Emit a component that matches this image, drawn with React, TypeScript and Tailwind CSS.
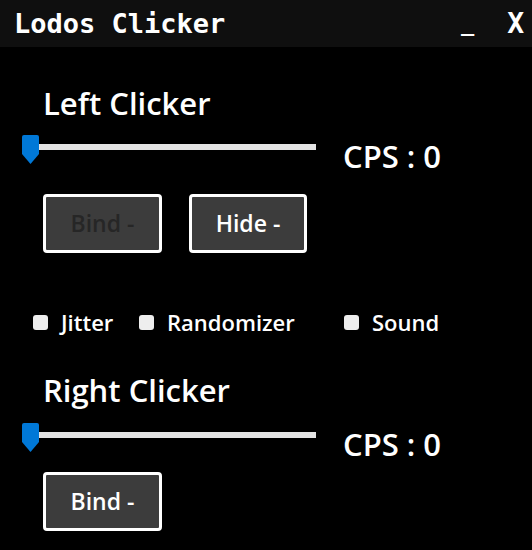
import React from 'react'

function Thumb() {
  return (
    <svg width="17" height="29" viewBox="0 0 17 29" className="absolute left-0 top-0">
      <path d="M2 0 H15 Q17 0 17 2 V19 L8.5 29 L0 19 V2 Q0 0 2 0 Z" fill="#0078d7" />
    </svg>
  )
}

function Slider() {
  return (
    <div className="relative h-[29px] w-[295px]">
      <div className="absolute left-[8px] top-[9px] h-[6px] w-[286px] bg-[#e4e4e4]" />
      <Thumb />
    </div>
  )
}

function Btn({ label, disabled = false, w = 'w-[119px]' }: { label: string; disabled?: boolean; w?: string }) {
  return (
    <button
      className={`${w} flex h-[59px] items-center justify-center rounded-[4px] border-[3px] border-white bg-[#3c3c3c] text-[23px] font-semibold ${disabled ? 'text-[#262626]' : 'text-white'}`}
    >
      {label}
    </button>
  )
}

function Check({ label, w }: { label: string; w: string }) {
  return (
    <div className={`${w} flex items-center`}>
      <span className="h-[15px] w-[15px] rounded-[3px] bg-[#eeeeee]" />
      <span className="ml-[13px] text-[22px] font-semibold leading-[30px] text-white">{label}</span>
    </div>
  )
}

export default function App() {
  return (
    <div className="h-[550px] w-[532px] overflow-hidden bg-black" style={{ fontFamily: '"Open Sans", "Noto Sans", sans-serif' }}>
      <div className="flex h-[47px] items-center bg-[#0f0f0f] pl-[14px] pr-[8px] text-white" style={{ fontFamily: '"DejaVu Sans Mono", monospace' }}>
        <span className="text-[27px] font-bold leading-none">Lodos Clicker</span>
        <span className="ml-auto text-[22px] font-bold leading-none">_</span>
        <span className="ml-[33px] text-[28px] font-bold leading-none">X</span>
      </div>

      <div className="pl-[22px]">
        <div className="ml-[21px] mt-[36px] text-[31px] font-semibold leading-[40px] text-white">Left Clicker</div>
        <div className="mt-[12px] flex items-start">
          <Slider />
          <span className="ml-[26px] mt-[1px] text-[31px] font-semibold leading-[40px] text-white">CPS : 0</span>
        </div>
        <div className="ml-[21px] mt-[18px] flex gap-[27px]">
          <Btn label="Bind -" disabled />
          <Btn label="Hide -" w="w-[118px]" />
        </div>

        <div className="ml-[11px] mt-[54px] flex items-center">
          <Check label="Jitter" w="w-[106px]" />
          <Check label="Randomizer" w="w-[205px]" />
          <Check label="Sound" w="w-[100px]" />
        </div>

        <div className="ml-[21px] mt-[33px] text-[31px] font-semibold leading-[40px] text-white">Right Clicker</div>
        <div className="mt-[13px] flex items-start">
          <Slider />
          <span className="ml-[26px] mt-[1px] text-[31px] font-semibold leading-[40px] text-white">CPS : 0</span>
        </div>
        <div className="ml-[21px] mt-[8px] flex">
          <Btn label="Bind -" />
        </div>
      </div>
    </div>
  )
}
